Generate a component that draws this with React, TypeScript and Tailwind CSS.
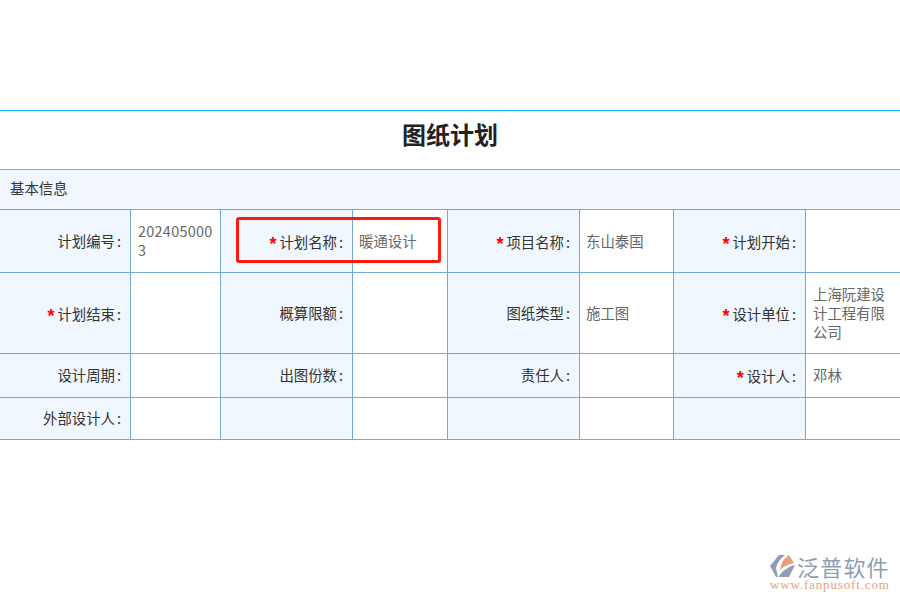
import React from 'react';

const FONT = '"Noto Sans CJK SC", sans-serif';

const Label = ({ text, required }: { text?: string; required?: boolean }) => (
    <td className="border border-[#74a9d8] bg-[#f0f7fe] pr-[9px] pb-[2px] text-right align-middle text-[14.4px] leading-[19px] text-[#333]">
        {required && <span className="relative top-[3px] mr-[3px] font-['Liberation_Sans',sans-serif] text-[18px] leading-[14px] font-bold text-[#f00]">*</span>}
        <span className={required ? 'relative top-[1px]' : ''}>
            {text}
            {text && <span className="ml-[2px]">:</span>}
        </span>
    </td>
);

const Value = ({ children, className = 'pl-[7px]' }: { children?: React.ReactNode; className?: string }) => (
    <td className={`border border-[#74a9d8] bg-white pr-[6px] pb-[2px] align-middle text-[14.4px] leading-[19px] break-all text-[#666] ${className}`}>
        {children}
    </td>
);

const Logo = () => (
    <div className="absolute left-[770px] top-[555px] w-[122px]">
        <div className="flex h-[23px] items-center">
            <svg width="25" height="23" viewBox="0 0 25 23" className="shrink-0">
                <path d="M9 0H15C10 4 7 8 6 13L8 22H6L0 11Z" fill="#8e9db5" />
                <path d="M10 15C11 8 14 3 19 0L24 8C19 9 14 11 10 15Z" fill="#e8a07c" />
                <path d="M9 21C12 16 18 12 25 10L19 22H9Z" fill="#8e9db5" />
            </svg>
            <span className="ml-[2px] text-[22px] leading-[23px] tracking-[1.2px] whitespace-nowrap text-[#8e9db5]">泛普软件</span>
        </div>
        <div className="font-['Liberation_Serif',serif] text-[13px] leading-[13px] tracking-[0.85px] whitespace-nowrap text-[#e8a07c]">
            www.fanpusoft.com
        </div>
    </div>
);

export default function App() {
    return (
        <div className="relative h-[600px] w-[900px] overflow-hidden bg-white" style={{ fontFamily: FONT }}>
            <div className="h-[110px]" />
            <div className="border-t border-[#00b4f0]">
                <h1 className="flex h-[58px] items-center justify-center pb-[13px] text-[24px] font-bold text-[#222]">图纸计划</h1>
            </div>
            <table className="w-[902px] -translate-x-px table-fixed border-collapse">
                <colgroup>
                    <col className="w-[131px]" />
                    <col className="w-[90px]" />
                    <col className="w-[132px]" />
                    <col className="w-[95px]" />
                    <col className="w-[132px]" />
                    <col className="w-[94px]" />
                    <col className="w-[132px]" />
                    <col className="w-[96px]" />
                </colgroup>
                <tbody>
                    <tr className="h-[40px]">
                        <td colSpan={8} className="border border-[#74a9d8] bg-[#f2f6fd] pb-[4px] pl-[10px] text-[14.4px] text-[#333]">基本信息</td>
                    </tr>
                    <tr className="h-[63px]">
                        <Label text="计划编号" />
                        <Value><span className="tracking-[0.3px]">202405000</span><br />3</Value>
                        <Label text="计划名称" required />
                        <Value className="pl-[6px]">暖通设计</Value>
                        <Label text="项目名称" required />
                        <Value className="pl-[6px]">东山泰国</Value>
                        <Label text="计划开始" required />
                        <Value />
                    </tr>
                    <tr className="h-[81px]">
                        <Label text="计划结束" required />
                        <Value />
                        <Label text="概算限额" />
                        <Value />
                        <Label text="图纸类型" />
                        <Value className="pl-[6px]">施工图</Value>
                        <Label text="设计单位" required />
                        <Value>上海阮建设计工程有限公司</Value>
                    </tr>
                    <tr className="h-[44px]">
                        <Label text="设计周期" />
                        <Value />
                        <Label text="出图份数" />
                        <Value />
                        <Label text="责任人" />
                        <Value />
                        <Label text="设计人" required />
                        <Value>邓林</Value>
                    </tr>
                    <tr className="h-[42px]">
                        <Label text="外部设计人" />
                        <Value />
                        <Label />
                        <Value />
                        <Label />
                        <Value />
                        <Label />
                        <Value />
                    </tr>
                </tbody>
            </table>
            <div className="absolute left-[236px] top-[217px] h-[46px] w-[205px] rounded-[3px] border-[3px] border-[#fb1a0e]" />
            <Logo />
        </div>
    );
}
